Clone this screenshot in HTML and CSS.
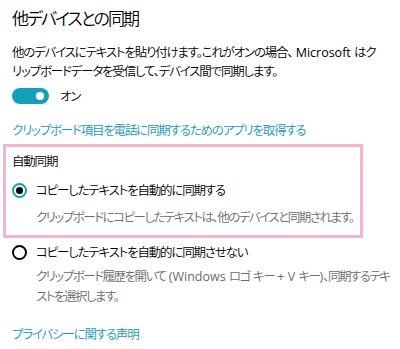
FILE: index.html
```html
<!DOCTYPE html>
<html lang="ja">
<head>
<meta charset="utf-8">
<link rel="stylesheet" href="styles.css">
</head>
<body>
<main class="page">
  <h1 class="title">他デバイスとの同期</h1>
  <p class="desc">他のデバイスにテキストを貼り付けます。これがオンの場合、<span class="lat"> Microsoft </span>はク<br>リップボードデータを受信して、デバイス間で同期します。</p>
  <div class="toggle-row">
    <span class="toggle"><span class="knob"></span></span>
    <span class="toggle-label">オン</span>
  </div>
  <a class="link app-link">クリップボード項目を電話に同期するためのアプリを取得する</a>
  <section class="box">
    <div class="box-title">自動同期</div>
    <div class="option">
      <span class="radio checked"><span class="dot"></span></span>
      <span class="option-label">コピーしたテキストを自動的に同期する</span>
    </div>
    <div class="option-desc">クリップボードにコピーしたテキストは、他のデバイスと同期されます。</div>
  </section>
  <div class="option option2">
    <span class="radio"></span>
    <span class="option-label">コピーしたテキストを自動的に同期させない</span>
  </div>
  <div class="option-desc desc2">クリップボード履歴を開いて<span class="lat"> (Windows </span>ロゴ<span class="lat"> </span>キー<span class="lat"> + V </span>キー<span class="lat">)</span>、同期するテキ<br>ストを選択します。</div>
  <a class="link privacy">プライバシーに関する声明</a>
</main>
</body>
</html>
```
FILE: styles.css
```css
html, body {
  margin: 0;
  padding: 0;
  background: #fff;
}
body {
  font-family: "Noto Sans CJK JP", "Noto Sans", sans-serif;
  font-feature-settings: "palt";
  font-weight: 350;
  color: #000;
  font-size: 12.5px;
  letter-spacing: -1.2px;
  width: 400px;
  height: 349px;
  overflow: hidden;
  white-space: nowrap;
}
.lat {
  font-family: "Open Sans", "Noto Sans", sans-serif;
  font-weight: 400;
  letter-spacing: 0;
  font-size: 12.5px;
}
.page {
  display: flex;
  flex-direction: column;
  align-items: flex-start;
  padding: 6px 0 0 12px;
}
.title {
  margin: 0;
  font-size: 17px;
  font-weight: 350;
  letter-spacing: -2px;
  line-height: 24px;
}
.desc {
  margin: 13px 0 0;
  line-height: 18px;
}
.toggle-row {
  display: flex;
  align-items: center;
  margin-top: 6px;
  height: 20px;
}
.toggle {
  display: flex;
  align-items: center;
  justify-content: flex-end;
  width: 37px;
  height: 16px;
  border-radius: 8px;
  background: #13a0b8;
  padding-right: 5px;
  box-sizing: border-box;
}
.knob {
  width: 8px;
  height: 8px;
  border-radius: 50%;
  background: #fff;
}
.toggle-label {
  margin-left: 11px;
  line-height: 20px;
}
.link {
  color: #1496b8;
  text-decoration: none;
  line-height: 18px;
}
.app-link {
  margin-top: 15px;
}
.box {
  margin: 5px 0 0 -9px;
  width: 360px;
  box-sizing: border-box;
  border: 3px solid #f3b5cb;
  padding: 5px 6px 9px 6px;
}
.box-title {
  line-height: 18px;
}
.option {
  display: flex;
  align-items: center;
  height: 20px;
  margin-top: 10px;
}
.radio {
  width: 15px;
  height: 15px;
  box-sizing: border-box;
  border: 2px solid #000;
  border-radius: 50%;
  display: flex;
  align-items: center;
  justify-content: center;
  flex: none;
}
.radio.checked {
  border-color: #13a0b8;
}
.dot {
  width: 7px;
  height: 7px;
  border-radius: 50%;
  background: #000;
}
.option-label {
  margin-left: 9px;
  line-height: 20px;
}
.option-desc {
  color: #6b6b6b;
  margin: 8px 0 0 24px;
  line-height: 18px;
  letter-spacing: -1.5px;
}
.option2 {
  margin-top: 4px;
}
.desc2 {
  margin-top: 4px;
  line-height: 19px;
  letter-spacing: -1.5px;
}
.privacy {
  margin-top: 20px;
}
```
